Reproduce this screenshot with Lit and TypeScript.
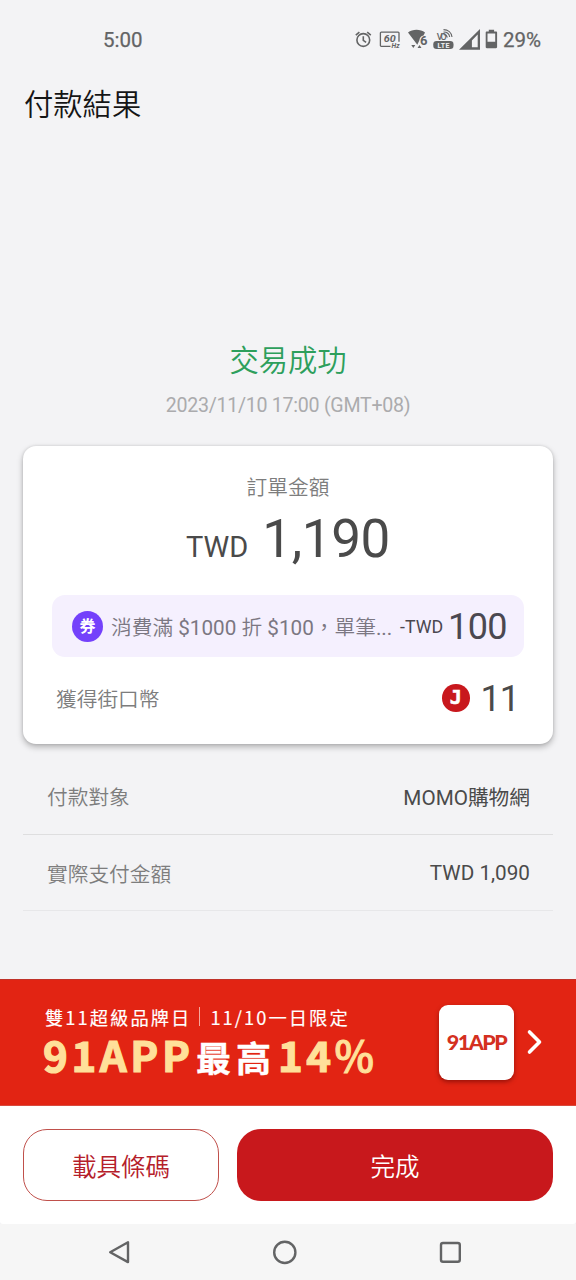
import { LitElement, html, css } from "lit";
import { customElement } from "lit/decorators.js";

@customElement("status-bar")
class StatusBar extends LitElement {
  static styles = css`
    :host { display: flex; height: 80px; box-sizing: border-box; padding: 0 34px 0 103px; justify-content: space-between; align-items: center; color: #636465; font: 400 20.500px/24px Roboto, sans-serif; -webkit-text-stroke: 0.250px #636465; }
    .right { display: flex; align-items: center; }
    .icons { display: block; -webkit-text-stroke: 0; }
    .pct { width: 39px; margin-left: 1px; white-space: nowrap; }
    .g { font-family: Roboto, sans-serif; }
  `;
  render() {
    return html`
      <span class="time">5:00</span>
      <div class="right">
        <svg class="icons" width="148" height="26" viewBox="354 27 148 26" fill="none" stroke="#636465">
          <circle cx="363.3" cy="40" r="6.4" stroke-width="1.6"></circle>
          <path d="M363.3 36.2v4.2l2.8 2M355.8 35.2l3.6-3M370.8 35.2l-3.6-3" stroke-width="1.6"></path>
          <path d="M390.500 46.300h-9.200a.9.9 0 0 1-.9-.9V33.100a.9.9 0 0 1 .9-.9h16.800a.9.9 0 0 1 .9.9v8.600" stroke-width="1.300"></path>
          <g fill="#636465" stroke="none" class="g">
            <text x="383.800" y="41.800" font-size="9.500" font-weight="700" font-style="italic" textLength="12" lengthAdjust="spacingAndGlyphs">60</text>
            <text x="391.600" y="48" font-size="6.300" font-weight="700" font-style="italic" textLength="8" lengthAdjust="spacingAndGlyphs">Hz</text>
            <path d="M408 32.500c4.500-3.800 12.500-3.800 17 0l-1.500 3c-2.300.3-3.800 2-4.200 5l-2 4.200z"></path>
            <path d="M411.300 45h4l-2 2.900zM417.500 47.900h4l-2-2.900z"></path>
            <text x="420" y="45" font-size="13" font-weight="700">6</text>
            <text x="436.800" y="40" font-size="9" font-weight="500" textLength="10">VO</text>
            <rect x="433.300" y="41" width="20.200" height="8" rx="3.300"></rect>
            <text x="437.500" y="47.500" font-size="7" font-weight="700" fill="#f3f3f5" textLength="12">LTE</text>
          </g>
          <path d="M443.500 34.500c2 0 3.500 1.300 3.800 3M443.500 32c3.500 0 5.800 2.200 6.200 5M443.500 29.600c4.600 0 8 3 8.500 7.400" stroke-width="1.100"></path>
          <path fill="#636465" stroke="none" fill-rule="evenodd" d="M480 29v20.800h-21zM477.700 34.500l-5.800 6v6.700h5.800z"></path>
          <path fill="#636465" stroke="none" fill-rule="evenodd" d="M488.800 29.800h5.300v1.700h1.900c.7 0 1.100.4 1.100 1.100v14.500c0 .7-.4 1.100-1.100 1.100h-9.200c-.7 0-1.100-.4-1.100-1.100V32.600c0-.7.4-1.100 1.100-1.100h2zM487.500 33.500v8.200h7.700v-8.200z"></path>
        </svg>
        <span class="pct">29%</span>
      </div>`;
  }
}

@customElement("result-card")
class ResultCard extends LitElement {
  static styles = css`
    :host { display: block; box-sizing: border-box; height: 298px; margin: 0 23px; padding: 28px 29px 0; background: #fff; border-radius: 13px; box-shadow: 0 3px 6px rgba(0,0,0,.27), 0 0 3px rgba(0,0,0,.12); color: #4a4a4a; font-family: Roboto, "Noto Sans CJK TC", sans-serif; }
    .label { text-align: center; font-size: 20.700px; line-height: 28px; color: #7d7d7d; font-weight: 350; }
    .amount { display: flex; justify-content: center; align-items: baseline; height: 71px; line-height: 75px; }
    .cur { font-size: 29px; margin-right: 14px; }
    .num { font-size: 53px; letter-spacing: -0.400px; }
    .coupon { display: flex; align-items: center; box-sizing: border-box; height: 62px; margin-top: 22px; padding: 0 18px 0 20px; border-radius: 13px; background: #f5f0fe; }
    .badge { flex: none; width: 31px; height: 31px; border-radius: 50%; background: #7441fb; color: #fff; font-weight: 700; font-size: 16px; line-height: 31px; text-align: center; }
    .desc { flex: none; width: 282px; padding-top: 3px; margin-left: 8px; font-size: 20.700px; line-height: 30px; color: #7b7782; white-space: nowrap; font-weight: 350; }
    .latin { font-weight: 400; }
    .minus { flex: none; margin-left: 7px; font-size: 17.800px; color: #4b4850; }
    .off { margin-left: 5px; padding-top: 1px; font-size: 36px; letter-spacing: -0.700px; color: #4b4850; }
    .coin { display: flex; align-items: center; height: 38px; margin-top: 22px; padding: 0 5px 0 4px; }
    .coin-label { flex: 1; font-size: 20.700px; color: #7d7d7d; font-weight: 350; }
    .j { width: 27.500px; height: 27.500px; margin-right: 11px; border-radius: 50%; background: #c8181d; color: #fff; font: 700 20px/27px "DejaVu Sans Mono", monospace; -webkit-text-stroke: 0.600px #fff; text-align: center; }
    .eleven { padding-top: 2px; font-size: 36px; letter-spacing: -1px; }
  `;
  render() {
    return html`
      <div class="label">訂單金額</div>
      <div class="amount"><span class="cur">TWD</span><span class="num">1,190</span></div>
      <div class="coupon">
        <span class="badge">券</span>
        <span class="desc">消費滿<span class="latin"> $1000 </span>折<span class="latin"> $100</span>，單筆<span class="latin">...</span></span>
        <span class="minus">-TWD</span><span class="off">100</span>
      </div>
      <div class="coin"><span class="coin-label">獲得街口幣</span><span class="j">J</span><span class="eleven">11</span></div>`;
  }
}

@customElement("promo-banner")
class PromoBanner extends LitElement {
  static styles = css`
    :host { display: flex; align-items: center; box-sizing: border-box; height: 127px; padding: 0 33px 0 43px; background: #e22413; border-top: 1px solid #bf3128; border-bottom: 1px solid #d84a3e; color: #fff; font-family: "Noto Sans CJK TC", sans-serif; }
    .copy { width: 396px; flex: none; white-space: nowrap; padding-bottom: 2px; }
    .top { display: flex; align-items: center; padding-left: 2px; font-weight: 400; font-size: 18.300px; line-height: 28px; letter-spacing: 2.050px; height: 28px; -webkit-text-stroke: 0.150px #fff; }
    .bar { width: 1px; height: 19px; margin: 0 10px 0 8px; background: #f6a79c; }
    .big { display: flex; align-items: baseline; height: 50px; line-height: 46px; font-weight: 700; font-size: 42px; color: #ffe09a; -webkit-text-stroke: 1.200px #ffe09a; stroke-linejoin: round; }
    .brand { letter-spacing: 3.600px; width: 153px; }
    .max { font-size: 35px; color: #fff; letter-spacing: 5px; width: 82px; -webkit-text-stroke: 0.400px #fff; }
    .rate { letter-spacing: 3.500px; }
    .sign { font-weight: 500; -webkit-text-stroke: 1px #ffe09a; }
    .logo { flex: none; width: 75px; height: 75px; border-radius: 9px; background: #fff; box-shadow: 0 2px 4px rgba(80,0,0,.5); color: #d4301f; font: 900 21.500px/75px Lato, sans-serif; letter-spacing: -1.500px; text-align: center; }
    .arrow { margin: -1px 0 0 12px; flex: none; }
  `;
  render() {
    return html`
      <div class="copy">
        <div class="top"><span>雙11超級品牌日</span><i class="bar"></i><span>11/10一日限定</span></div>
        <div class="big"><span class="brand">91APP</span><span class="max">最高</span><span class="rate">14<span class="sign">%</span></span></div>
      </div>
      <div class="logo">91APP</div>
      <svg class="arrow" width="18" height="28" viewBox="0 0 18 28" fill="none" stroke="#fff" stroke-width="3.600" stroke-linecap="round" stroke-linejoin="round"><path d="M3.500 4l10 10-10 10"></path></svg>`;
  }
}

@customElement("app-root")
class AppRoot extends LitElement {
  static styles = css`
    :host { display: flex; flex-direction: column; width: 576px; height: 1280px; overflow: hidden; background: #f3f3f5; font-family: Roboto, "Noto Sans CJK TC", sans-serif; }
    .title { margin: 1px 0 0; padding-left: 24px; height: 48px; font-weight: 350; font-size: 29.300px; line-height: 48px; color: #151515; }
    .ok { margin-top: 212px; height: 40px; line-height: 40px; text-align: center; font-size: 29.300px; font-weight: 350; color: #2d9f5c; }
    .date { height: 50px; line-height: 50px; text-align: center; font-size: 19.600px; letter-spacing: -0.270px; color: #ababad; margin-bottom: 15px; }
    .rows { margin: 14px 23px 0; height: 221px; }
    .row { display: flex; justify-content: space-between; align-items: center; height: 77px; padding: 0 23px 0 24px; box-sizing: border-box; border-bottom: 1px solid #dededf; font-size: 20.700px; font-weight: 350; color: #7d7d7d; }
    .row.last { height: 76px; border-color: #e7e7e9; }
    .val { color: #4a4a4a; font-size: 20.700px; font-weight: 400; }
    .actions { display: flex; gap: 18px; height: 118px; box-sizing: border-box; padding: 23px 23px 0; background: #fff; border-radius: 0 0 3px 3px; }
    .btn { box-sizing: border-box; height: 72px; border-radius: 24px; font: 350 24.500px/72px "Noto Sans CJK TC", sans-serif; text-align: center; padding: 0; border: 0; }
    .ghost { width: 196px; border: 1.500px solid #c0504b; line-height: 72px; background: #fff; color: #b5202a; }
    .primary { flex: 1; padding-top: 1px; background: #c8181c; color: #fff; }
    .nav { display: flex; flex: 1; background: #f6f6f6; }
    .keys { display: block; }
  `;
  render() {
    return html`
      <status-bar></status-bar>
      <h1 class="title">付款結果</h1>
      <div class="ok">交易成功</div>
      <div class="date">2023/11/10 17:00 (GMT+08)</div>
      <result-card></result-card>
      <div class="rows">
        <div class="row"><span>付款對象</span><span class="val">MOMO購物網</span></div>
        <div class="row last"><span>實際支付金額</span><span class="val">TWD 1,090</span></div>
      </div>
      <promo-banner></promo-banner>
      <div class="actions"><button class="btn ghost">載具條碼</button><button class="btn primary">完成</button></div>
      <div class="nav">
        <svg class="keys" width="576" height="56" viewBox="0 1224 576 56" fill="none" stroke="#636465" stroke-width="2.400" stroke-linejoin="round">
          <path d="M128 1242.300v19.800l-17.800-9.900z"></path>
          <circle cx="284.800" cy="1252.400" r="10.600"></circle>
          <rect x="441" y="1243" width="18.800" height="18.800" rx="2"></rect>
        </svg>
      </div>`;
  }
}
